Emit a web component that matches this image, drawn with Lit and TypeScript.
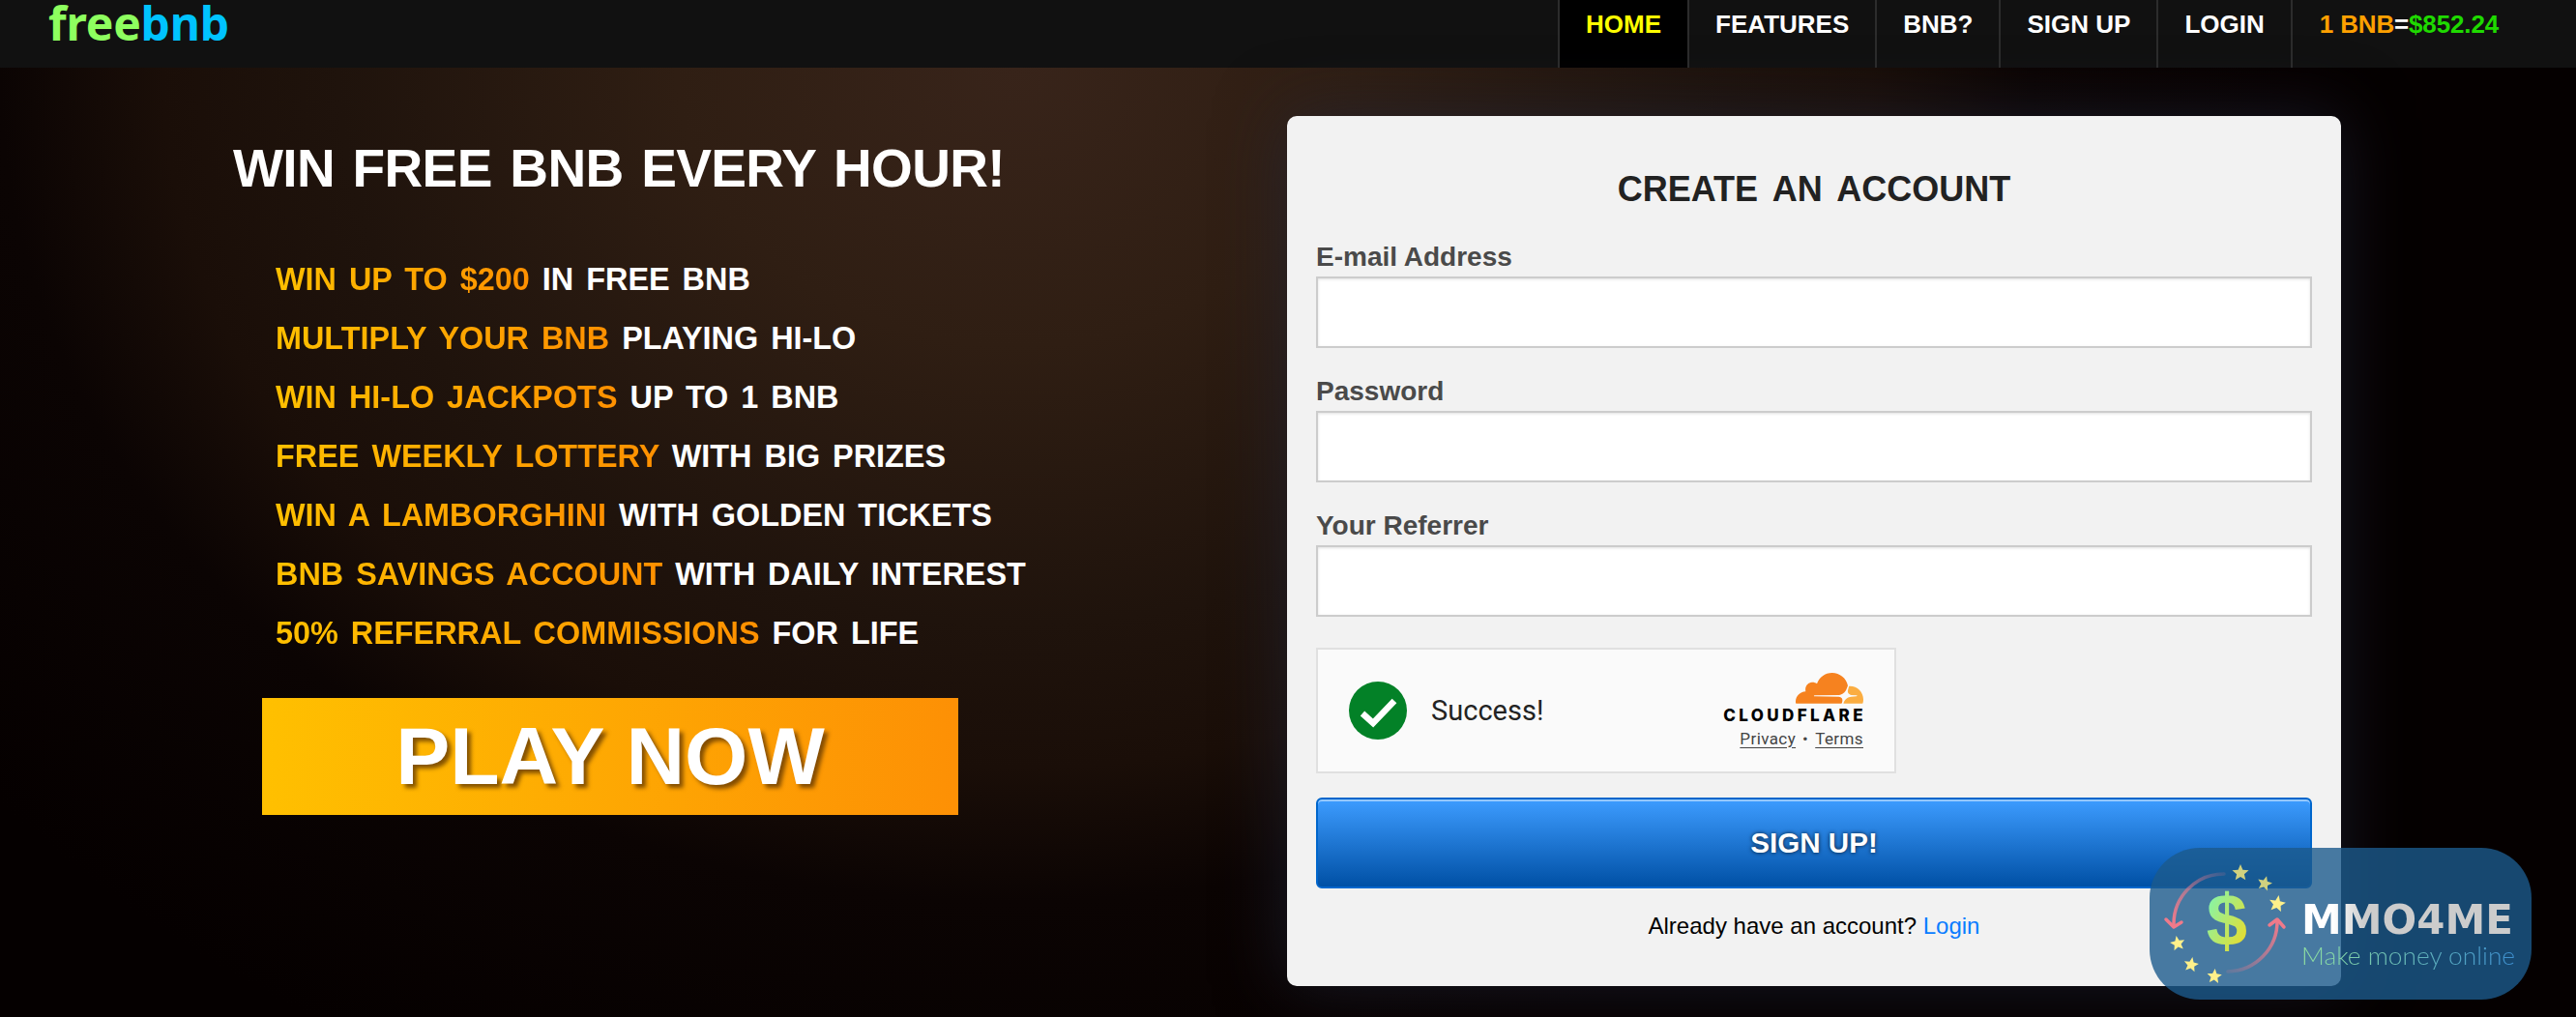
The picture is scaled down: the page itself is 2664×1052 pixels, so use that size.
import { LitElement, html, css, svg } from 'lit';
import { customElement } from 'lit/decorators.js';

const NAV = ['HOME', 'FEATURES', 'BNB?', 'SIGN UP', 'LOGIN'];

const PERKS: [string, string][] = [
  ['WIN UP TO $200', 'IN FREE BNB'],
  ['MULTIPLY YOUR BNB', 'PLAYING HI-LO'],
  ['WIN HI-LO JACKPOTS', 'UP TO 1 BNB'],
  ['FREE WEEKLY LOTTERY', 'WITH BIG PRIZES'],
  ['WIN A LAMBORGHINI', 'WITH GOLDEN TICKETS'],
  ['BNB SAVINGS ACCOUNT', 'WITH DAILY INTEREST'],
  ['50% REFERRAL COMMISSIONS', 'FOR LIFE'],
];

const FIELDS = [
  { label: 'E-mail Address', type: 'email' },
  { label: 'Password', type: 'password' },
  { label: 'Your Referrer', type: 'text' },
];

// watermark stars: cx, cy, radius, rotation, fill
const STARS: [number, number, number, number, string][] = [
  [94, 26, 9, 0, '#d0d17f'],
  [119, 37, 8, 15, '#d0d17f'],
  [132, 58, 9, 10, '#fff08a'],
  [29, 99, 8, -10, '#fff08a'],
  [43, 121, 8, 10, '#fff08a'],
  [67, 133, 8, 5, '#fff08a'],
];

function starPoints(cx: number, cy: number, r: number, rot: number) {
  const pts: string[] = [];
  for (let i = 0; i < 10; i++) {
    const rad = i % 2 ? r * 0.45 : r;
    const a = ((rot + i * 36 - 90) * Math.PI) / 180;
    pts.push(`${(cx + rad * Math.cos(a)).toFixed(1)},${(cy + rad * Math.sin(a)).toFixed(1)}`);
  }
  return pts.join(' ');
}

@customElement('app-root')
export class AppRoot extends LitElement {
  static styles = css`
    :host {
      display: block;
      position: relative;
      height: 100vh;
      min-height: 1052px;
      overflow: hidden;
      font-family: 'Liberation Sans', Arial, sans-serif;
      background:
        radial-gradient(ellipse 1400px 1150px at 1050px 70px, #38241a 0%, #2f1e13 25%, #1f130c 50%, #1a0e08 63%, #0b0403 75%, #050000 100%),
        #050000;
    }
    nav {
      display: flex;
      justify-content: space-between;
      height: 70px;
      background: #111;
      box-sizing: border-box;
    }
    .logo {
      padding-left: 50px;
      font-family: 'Noto Sans', sans-serif;
      font-weight: 700;
      font-size: 48px;
      line-height: 48px;
      letter-spacing: -0.2px;
      color: #8eff5f;
    }
    .logo span {
      color: #00c3ff;
    }
    .menu {
      display: flex;
      padding-right: 80px;
      border-left: 2px solid #2c2c2c;
      font-weight: bold;
      font-size: 26px;
      line-height: 50px;
      color: #fff;
    }
    .menu a {
      padding: 0 27px;
      border-right: 2px solid #2c2c2c;
    }
    .menu a.active {
      background: #000;
      color: #ff0;
    }
    .rate {
      padding-left: 28px;
      letter-spacing: -0.15px;
    }
    .rate .or {
      color: #ffa000;
    }
    .rate .gr {
      color: #1fd900;
    }
    main {
      display: flex;
      align-items: flex-start;
      padding: 50px 0 0 241px;
    }
    .pitch {
      width: 1090px;
    }
    h1 {
      margin: 0;
      padding-top: 22px;
      font-size: 55px;
      line-height: 64px;
      letter-spacing: -0.65px;
      word-spacing: 4px;
      color: #fff;
      white-space: nowrap;
    }
    ul {
      list-style: none;
      margin: 0;
      padding: 53px 0 0 44px;
    }
    li {
      font-weight: bold;
      font-size: 32.4px;
      line-height: 61px;
      color: #fff;
      word-spacing: 4px;
      white-space: nowrap;
    }
    li span {
      background: linear-gradient(90deg, #ffc000, #ff9000);
      -webkit-background-clip: text;
      background-clip: text;
      color: transparent;
    }
    .play {
      display: block;
      width: 720px;
      height: 121px;
      margin: 36px 0 0 30px;
      background: linear-gradient(90deg, #ffc000, #fd9005);
      color: #fff;
      font-weight: bold;
      font-size: 84px;
      line-height: 121px;
      text-align: center;
      text-shadow: 4px 4px 4px rgba(90, 50, 0, 0.75);
    }
    .card {
      width: 1090px;
      height: 900px;
      box-sizing: border-box;
      padding: 55px 30px 0;
      background: #f2f2f2;
      border-radius: 10px;
      box-shadow: 0 0 70px rgba(35, 40, 60, 0.6);
    }
    h2 {
      margin: 0;
      font-size: 36px;
      line-height: 42px;
      color: #222;
      text-align: center;
      word-spacing: 6px;
    }
    .field {
      display: block;
      height: 139px;
    }
    .field:first-of-type {
      margin-top: 34px;
    }
    .field span {
      display: block;
      margin-bottom: 6px;
      font-weight: bold;
      font-size: 28px;
      line-height: 29px;
      color: #4a4a4a;
    }
    input {
      display: block;
      width: 100%;
      height: 74px;
      box-sizing: border-box;
      border: 2px solid #ccc;
      background: #fff;
      box-shadow: inset 0 1px 3px rgba(0, 0, 0, 0.12);
      outline: none;
    }
    .turnstile {
      display: flex;
      align-items: center;
      width: 600px;
      height: 130px;
      box-sizing: border-box;
      margin-top: 2px;
      padding: 0 32px;
      border: 2px solid #e0e0e0;
      background: #fafafa;
      font-family: Roboto, sans-serif;
      color: #232323;
    }
    .turnstile .tick {
      flex: none;
      width: 60px;
      height: 60px;
    }
    .turnstile .msg {
      flex: 1;
      padding-left: 25px;
      font-size: 29px;
    }
    .brand {
      display: flex;
      flex-direction: column;
      align-items: flex-end;
    }
    .brand svg {
      display: block;
      width: 70px;
      height: 34px;
    }
    .wordmark {
      margin-top: 4px;
      margin-right: -3px;
      font-family: Inter, sans-serif;
      font-weight: 800;
      font-size: 17px;
      line-height: 16px;
      letter-spacing: 3.4px;
      color: #000;
    }
    .legal {
      display: flex;
      gap: 7px;
      margin-top: 4px;
      font-size: 17px;
      line-height: 24px;
      letter-spacing: 0.4px;
      color: #444;
    }
    .legal u {
      text-underline-offset: 3px;
    }
    .submit {
      display: block;
      width: 100%;
      height: 94px;
      margin-top: 25px;
      box-sizing: border-box;
      border: 2px solid #0066cc;
      border-radius: 6px;
      background: linear-gradient(#3d9cff, #0050a5);
      box-shadow: inset 0 2px 0 rgba(255, 255, 255, 0.45);
      color: #fff;
      font-family: inherit;
      font-weight: bold;
      font-size: 29.6px;
      text-shadow: 0 0 4px rgba(0, 0, 0, 0.8);
    }
    .have {
      margin-top: 23px;
      font-size: 24px;
      line-height: 32px;
      text-align: center;
      color: #000;
    }
    .have a {
      color: #0a7cff;
    }
    .badge {
      position: absolute;
      left: 2223px;
      top: 877px;
      width: 395px;
      height: 157px;
      border-radius: 52px;
      background: rgba(27, 90, 140, 0.8);
    }
    .badge svg {
      position: absolute;
      left: 0;
      top: 0;
      width: 160px;
      height: 157px;
    }
    .badge .name {
      position: absolute;
      left: 157px;
      top: 50px;
      font-family: 'DejaVu Sans', sans-serif;
      font-weight: 700;
      font-size: 42px;
      line-height: 50px;
      background: linear-gradient(90deg, #fff 15%, #ccc 30%);
      -webkit-background-clip: text;
      background-clip: text;
      color: transparent;
    }
    .badge .tag {
      position: absolute;
      left: 157px;
      top: 94px;
      font-family: Lato, sans-serif;
      font-weight: 300;
      font-size: 26.3px;
      line-height: 34px;
      white-space: nowrap;
      background: linear-gradient(90deg, #8fe0a0, #3d8fd0);
      -webkit-background-clip: text;
      background-clip: text;
      color: transparent;
    }
  `;

  badgeIcon() {
    return svg`
      <defs>
        <linearGradient id="dollar" x1="0" y1="0" x2="1" y2="1">
          <stop offset="0.15" stop-color="#86f5a8" />
          <stop offset="0.85" stop-color="#e6dc30" />
        </linearGradient>
        <linearGradient id="arcL" gradientUnits="userSpaceOnUse" x1="77" y1="27" x2="25" y2="80">
          <stop offset="0" stop-color="#f07a8a" stop-opacity="0.15" />
          <stop offset="1" stop-color="#f07a8a" />
        </linearGradient>
        <linearGradient id="arcR" gradientUnits="userSpaceOnUse" x1="81" y1="128" x2="132" y2="75">
          <stop offset="0" stop-color="#f07a8a" stop-opacity="0.15" />
          <stop offset="1" stop-color="#f07a8a" />
        </linearGradient>
      </defs>
      <path d="M77 27A52 52 0 0 0 25 80" fill="none" stroke="url(#arcL)" stroke-width="3.5" stroke-linecap="round" />
      <path d="M17 74L25 82L33 77" fill="none" stroke="#f07a8a" stroke-width="3.5" stroke-linecap="round" stroke-linejoin="round" />
      <path d="M81 128A52 52 0 0 0 132 75" fill="none" stroke="url(#arcR)" stroke-width="3.5" stroke-linecap="round" />
      <path d="M124 80L132 74L139 82" fill="none" stroke="#f07a8a" stroke-width="3.5" stroke-linecap="round" stroke-linejoin="round" />
      <text x="80" y="101" text-anchor="middle" font-family="Liberation Sans" font-weight="700" font-size="76" fill="url(#dollar)">$</text>
      ${STARS.map(([x, y, r, rot, fill]) => svg`<polygon points=${starPoints(x, y, r, rot)} fill=${fill} />`)}
    `;
  }

  render() {
    return html`
      <nav>
        <div class="logo">free<span>bnb</span></div>
        <div class="menu">
          ${NAV.map((item, i) => html`<a class=${i === 0 ? 'active' : ''}>${item}</a>`)}
          <div class="rate"><span class="or">1 BNB</span>=<span class="gr">$852.24</span></div>
        </div>
      </nav>
      <main>
        <section class="pitch">
          <h1>WIN FREE BNB EVERY HOUR!</h1>
          <ul>
            ${PERKS.map(([hot, rest]) => html`<li><span>${hot}</span> ${rest}</li>`)}
          </ul>
          <a class="play">PLAY NOW</a>
        </section>
        <form class="card">
          <h2>CREATE AN ACCOUNT</h2>
          ${FIELDS.map(
            (f) => html`<label class="field"><span>${f.label}</span><input type=${f.type} /></label>`
          )}
          <div class="turnstile">
            <svg class="tick" viewBox="0 0 60 60">
              <circle cx="30" cy="30" r="30" fill="#038127" />
              <path d="M14 33L25 43L47 20" fill="none" stroke="#fff" stroke-width="6.5" />
            </svg>
            <div class="msg">Success!</div>
            <div class="brand">
              <svg viewBox="0 5.9 24 11.6">
                <path
                  fill="#f6821f"
                  d="M16.5088 16.8447c.1475-.5068.0908-.9707-.1553-1.3154-.2246-.3164-.6045-.499-1.0615-.5205l-8.6592-.1123a.1559.1559 0 0 1-.1333-.0713c-.0283-.042-.0351-.0986-.021-.1553.0278-.084.1123-.1484.2036-.1562l8.7359-.1123c1.0351-.0489 2.1601-.8868 2.5537-1.9136l.499-1.3013c.0215-.0561.0293-.1128.0147-.168-.5625-2.5463-2.835-4.4453-5.5499-4.4453-2.5039 0-4.6284 1.6177-5.3876 3.8614-.4927-.3658-1.1187-.5625-1.794-.499-1.2026.119-2.1665 1.083-2.2861 2.2856-.0283.31-.0069.6128.0635.894C1.5683 13.171 0 14.7754 0 16.752c0 .1748.0142.3515.0352.5273.0141.083.0844.1475.1689.1475h15.9814c.0909 0 .1758-.0645.2032-.1553l.12-.4268z"
                />
                <path
                  fill="#fbad41"
                  d="M19.2656 11.2813c-.0771 0-.1611 0-.2383.0112-.0566 0-.1054.0415-.127.0976l-.3378 1.1744c-.1475.5068-.0918.9707.1543 1.3164.2256.3164.6055.498 1.0625.5195l1.8437.1133c.0557 0 .1055.0263.1329.0703.0283.043.0351.1074.0214.1562-.0283.084-.1132.1485-.204.1553l-1.921.1123c-1.041.0488-2.1582.8867-2.5527 1.914l-.1406.3585c-.0283.0713.0215.1416.0986.1416h6.5977c.0771 0 .1474-.0489.169-.126.1122-.4082.1757-.837.1757-1.2803 0-2.6025-2.125-4.727-4.7344-4.727"
                />
              </svg>
              <div class="wordmark">CLOUDFLARE</div>
              <div class="legal"><u>Privacy</u><span>•</span><u>Terms</u></div>
            </div>
          </div>
          <button class="submit" type="button">SIGN UP!</button>
          <div class="have">Already have an account? <a>Login</a></div>
        </form>
      </main>
      <aside class="badge">
        <svg viewBox="0 0 160 157">${this.badgeIcon()}</svg>
        <div class="name">MMO4ME</div>
        <div class="tag">Make money online</div>
      </aside>
    `;
  }
}
